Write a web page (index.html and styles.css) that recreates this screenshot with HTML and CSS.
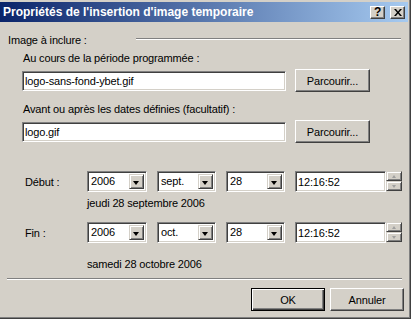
FILE: index.html
```html
<!doctype html>
<html>
  <head>
    <title>Propriétés de l'insertion d'image temporaire</title>
    <link rel="stylesheet" href="styles.css">
  </head>
  <body>
    <div class="window">
      <div class="titlebar">
        <span class="title">Propriétés de l'insertion d'image temporaire</span>
        <span class="tbtn help">?</span>
        <span class="tbtn close">
          <svg width="8" height="7" viewBox="0 0 8 7"><path d="M0 0h2l2 2.5L6 0h2L5 3.5 8 7H6L4 4.5 2 7H0l3-3.5z" fill="#000"/></svg>
        </span>
      </div>

      <div class="group-head">
        <span class="group-label">Image à inclure :</span>
        <span class="rule"></span>
      </div>

      <div class="field-label first">Au cours de la période programmée :</div>
      <div class="field-row">
        <input type="text" class="text" value="logo-sans-fond-ybet.gif"/>
        <span class="btn browse">Parcourir...</span>
      </div>

      <div class="field-label">Avant ou après les dates définies (facultatif) :</div>
      <div class="field-row">
        <input type="text" class="text" value="logo.gif"/>
        <span class="btn browse">Parcourir...</span>
      </div>

      <div class="date-row start">
        <span class="date-label">Début :</span>
        <span class="combo year"><span class="value">2006</span><span class="arrow"></span></span>
        <span class="combo month"><span class="value">sept.</span><span class="arrow"></span></span>
        <span class="combo day"><span class="value">28</span><span class="arrow"></span></span>
        <span class="time"><input type="text" class="time-input" value="12:16:52"/><span class="spin"><span class="up"></span><span class="down"></span></span></span>
      </div>
      <div class="date-text first">jeudi 28 septembre 2006</div>

      <div class="date-row end">
        <span class="date-label">Fin :</span>
        <span class="combo year"><span class="value">2006</span><span class="arrow"></span></span>
        <span class="combo month"><span class="value">oct.</span><span class="arrow"></span></span>
        <span class="combo day"><span class="value">28</span><span class="arrow"></span></span>
        <span class="time"><input type="text" class="time-input" value="12:16:52"/><span class="spin"><span class="up"></span><span class="down"></span></span></span>
      </div>
      <div class="date-text last">samedi 28 octobre 2006</div>

      <div class="separator"></div>

      <div class="actions">
        <span class="btn default">OK</span>
        <span class="btn">Annuler</span>
      </div>
    </div>
  </body>
</html>
```

FILE: styles.css
```css
body {
  margin: 0;
  font-family: "Liberation Sans", Arial, sans-serif;
  font-size: 11px;
  letter-spacing: -0.15px;
  color: #000;
  background: #d4d0c8;
}
.window {
  box-sizing: border-box;
  width: 411px;
  height: 319px;
  padding-top: 2px;
  background: #d4d0c8;
  border-right: 1px solid #404040;
  border-bottom: 1px solid #404040;
  box-shadow: inset -1px -1px #808080;
}
.titlebar {
  display: flex;
  align-items: center;
  height: 20px;
  margin-right: 2px;
  padding: 0 3px 0 3px;
  background: linear-gradient(to right, #0a246a, #a6caf0);
}
.title {
  flex: 1;
  color: #fff;
  font-weight: bold;
  font-size: 12px;
  letter-spacing: 0;
  white-space: nowrap;
}
.tbtn {
  display: flex;
  align-items: center;
  justify-content: center;
  box-sizing: border-box;
  width: 15px;
  height: 13px;
  background: #d4d0c8;
  border: 1px solid;
  border-color: #fff #404040 #404040 #fff;
  box-shadow: inset -1px -1px #808080;
  font-weight: bold;
  font-size: 12px;
  line-height: 11px;
}
.tbtn.help {
  margin-right: 5px;
}
.group-head {
  display: flex;
  margin-top: 12px;
  padding-left: 8px;
}
.group-label {
  width: 128px;
  line-height: 13px;
}
.rule {
  flex: 1;
  height: 0;
  margin: 4px 9px 0 0;
  border-top: 1px solid #808080;
  border-bottom: 1px solid #fff;
}
.field-label {
  margin-top: 11px;
  padding-left: 23px;
  line-height: 13px;
}
.field-label.first {
  margin-top: 5px;
}
.field-row {
  display: flex;
  align-items: center;
  gap: 9px;
  margin-top: 4px;
  padding-left: 22px;
}
input.text, input.time-input {
  box-sizing: border-box;
  height: 20px;
  margin: 0;
  padding: 0 2px;
  font-family: "Liberation Sans", Arial, sans-serif;
  font-size: 11px;
  letter-spacing: -0.15px;
  color: #000;
  background: #fff;
  border: 1px solid;
  border-color: #808080 #fff #fff #808080;
  box-shadow: inset 1px 1px #404040, inset -1px -1px #d4d0c8;
  border-radius: 0;
  outline: none;
}
input.text {
  width: 264px;
}
.btn {
  display: flex;
  align-items: center;
  justify-content: center;
  box-sizing: border-box;
  height: 23px;
  width: 74px;
  background: #d4d0c8;
  border: 1px solid;
  border-color: #fff #404040 #404040 #fff;
  box-shadow: inset -1px -1px #808080;
}
.btn.browse {
  width: 75px;
}
.btn.default {
  border: 1px solid #000;
  box-shadow: inset 1px 1px #fff, inset -1px -1px #404040, inset -2px -2px #808080;
}
.date-row {
  display: flex;
  align-items: center;
  height: 21px;
  padding-left: 25px;
}
.date-row.start {
  margin-top: 28px;
}
.date-row.end {
  margin-top: 12px;
}
.date-label {
  width: 62px;
}
.combo {
  display: flex;
  box-sizing: border-box;
  height: 21px;
  width: 59px;
  margin-right: 10px;
  padding: 2px;
  background: #fff;
  border: 1px solid;
  border-color: #808080 #fff #fff #808080;
  box-shadow: inset 1px 1px #404040, inset -1px -1px #d4d0c8;
}
.combo.year {
  width: 60px;
}
.combo .value {
  flex: 1;
  padding-left: 1px;
  line-height: 15px;
}
.combo .arrow {
  position: relative;
  box-sizing: border-box;
  width: 15px;
  background: #d4d0c8;
  border: 1px solid;
  border-color: #d4d0c8 #404040 #404040 #d4d0c8;
  box-shadow: inset 1px 1px #fff, inset -1px -1px #808080;
}
.combo .arrow::after {
  content: "";
  position: absolute;
  left: 3px;
  top: 6px;
  border-left: 3.5px solid transparent;
  border-right: 3.5px solid transparent;
  border-top: 4px solid #000;
}
.time {
  display: flex;
}
input.time-input {
  width: 91px;
  height: 21px;
}
.spin {
  display: flex;
  flex-direction: column;
  width: 16px;
  height: 20px;
}
.spin span {
  position: relative;
  flex: 1;
  box-sizing: border-box;
  background: #d4d0c8;
  border: 1px solid;
  border-color: #d4d0c8 #404040 #404040 #d4d0c8;
  box-shadow: inset 1px 1px #fff, inset -1px -1px #808080;
}
.spin span::after {
  content: "";
  position: absolute;
  left: 5px;
  top: 3px;
  border-left: 2.5px solid transparent;
  border-right: 2.5px solid transparent;
}
.spin .up::after {
  border-bottom: 3px solid #a0a0a0;
}
.spin .down::after {
  border-top: 3px solid #a0a0a0;
}
.date-text {
  padding-left: 87px;
  line-height: 13px;
}
.date-text.first {
  margin-top: 5px;
}
.date-text.last {
  margin-top: 15px;
}
.separator {
  height: 0;
  margin: 7px 8px 0 7px;
  border-top: 1px solid #808080;
  border-bottom: 1px solid #fff;
}
.actions {
  display: flex;
  justify-content: flex-end;
  gap: 5px;
  margin-top: 8px;
  padding-right: 6px;
}
```
